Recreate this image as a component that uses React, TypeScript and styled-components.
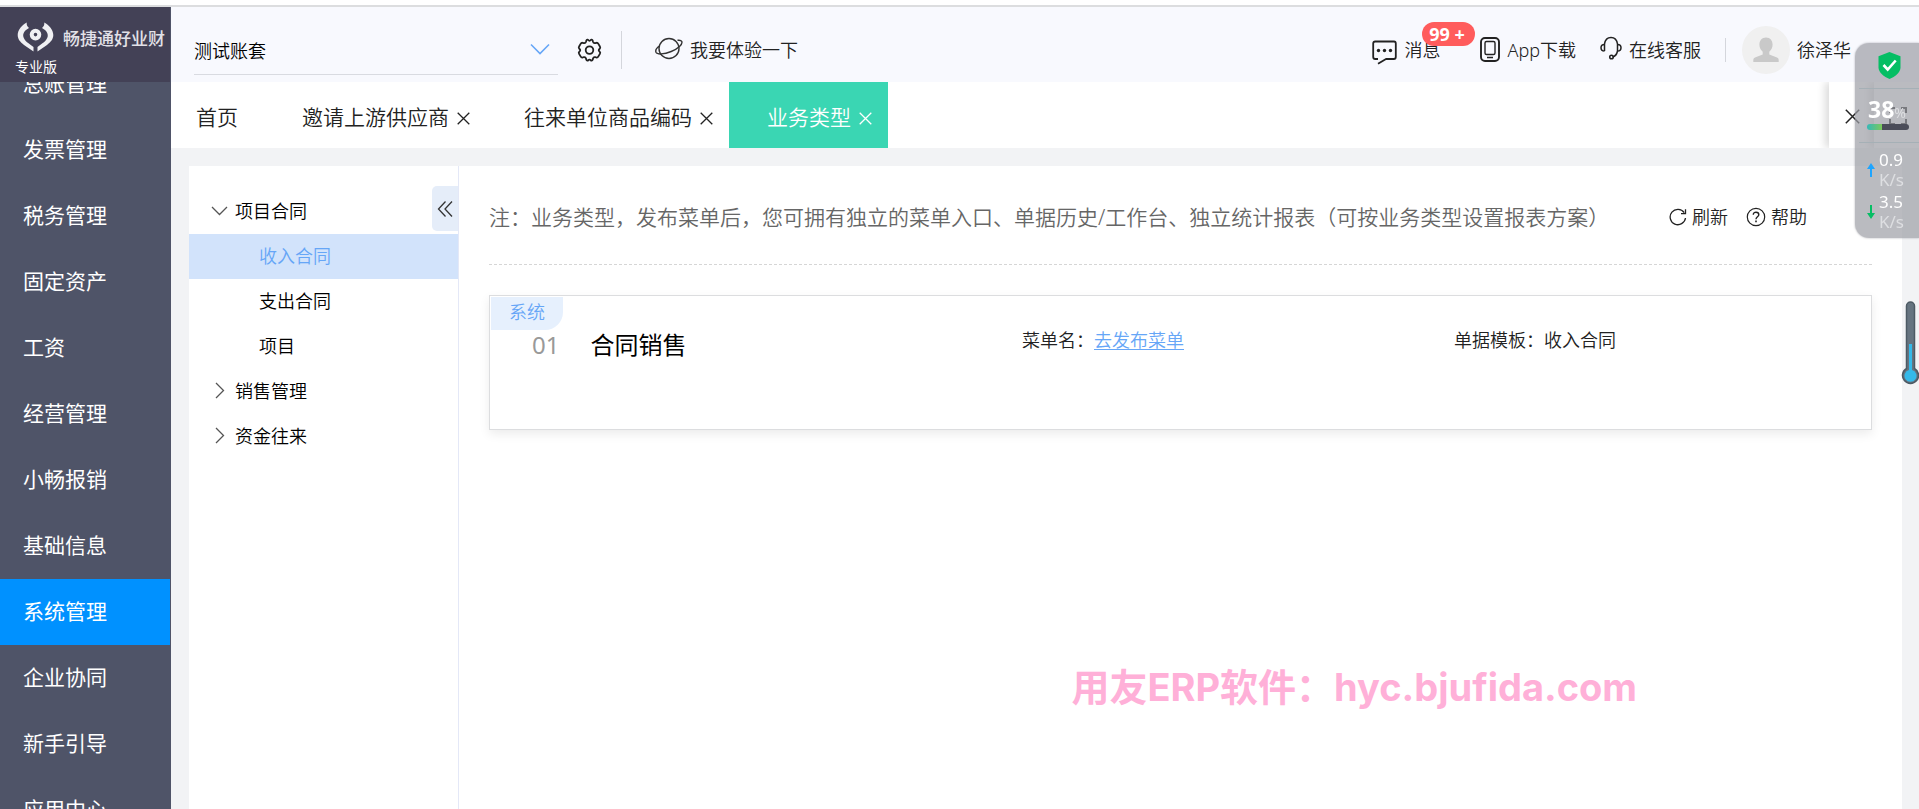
import React from "react";
import styled, { createGlobalStyle } from "styled-components";

const GlobalStyle = createGlobalStyle`
  *, *::before, *::after { box-sizing: border-box; }
  body {
    margin: 0;
    background: #fff;
    color: #222;
    font-family: "Noto Sans", "Noto Sans CJK SC", sans-serif;
    font-size: 18px;
    font-weight: 350;
    line-height: 24px;
    overflow: hidden;
  }
  button, select { font: inherit; color: inherit; background: none; border: 0; padding: 0; cursor: pointer; }
  a { color: inherit; text-decoration: none; }
  ul { list-style: none; margin: 0; padding: 0; }
  svg { display: block; flex: none; }
`;

const Page = styled.div`
  display: flex;
  height: 100vh;
  padding-top: 7px;
  background: linear-gradient(#fff 5px, #dcdddf 5px, #dcdddf 7px, #fff 7px);
`;

/* Sidebar */

const Sidebar = styled.aside`
  flex: none;
  display: flex;
  flex-direction: column;
  width: 171px;
  background: #4f5468;
`;

const Brand = styled.div`
  flex: none;
  height: 75px;
  padding: 14px 0 0 15px;
  margin-right: 1px;
  background: #434156;
  color: #fff;
`;

const BrandRow = styled.div`
  display: flex;
  align-items: center;
  gap: 9px;
  height: 32px;
  padding-left: 2px;
`;

const BrandName = styled.span`
  padding-top: 4px;
  font-size: 17px;
  font-weight: 500;
  line-height: 24px;
  color: #e2e1e8;
  white-space: nowrap;
`;

const Edition = styled.div`
  font-size: 14px;
  font-weight: 400;
  line-height: 20px;
  margin-top: 4px;
`;

const NavClip = styled.nav`
  flex: 1;
  min-height: 0;
  overflow: hidden;
`;

const NavList = styled.ul`
  margin-top: -31px;
`;

const NavItem = styled.a<{ $active?: boolean }>`
  display: flex;
  align-items: center;
  height: 66px;
  margin-right: 1px;
  padding: 0 0 2px 23px;
  font-size: 21px;
  font-weight: 400;
  color: #fff;
  background: ${(p) => (p.$active ? "#0091ff" : "transparent")};
`;

/* Header */

const Main = styled.div`
  flex: 1;
  min-width: 0;
  display: flex;
  flex-direction: column;
`;

const Header = styled.header`
  flex: none;
  display: flex;
  align-items: center;
  height: 75px;
  padding: 10px 68px 0 23px;
  background: #f8f9fe;
`;

const AccountField = styled.div`
  position: relative;
  align-self: flex-start;
  flex: 0 1 364px;
  height: 58px;
  border-bottom: 1px solid #d9dbe1;
`;

const AccountSelect = styled.select`
  appearance: none;
  width: 100%;
  height: 57px;
  padding-top: 11px;
  color: #000;
  outline: 0;
`;

const SelectArrow = styled.svg`
  position: absolute;
  right: 8px;
  top: 26px;
  pointer-events: none;
`;

const Divider = styled.span<{ $h: number }>`
  flex: none;
  width: 1px;
  height: ${(p) => p.$h}px;
  background: #d4d6dc;
`;

const HeaderLink = styled.a`
  position: relative;
  display: flex;
  align-items: center;
  gap: 7px;
  white-space: nowrap;
`;

const LeftTools = styled.div`
  display: flex;
  align-items: center;
  gap: 19px;
  margin-left: 19px;
`;

const TrialLink = styled(HeaderLink)`
  margin-left: 14px;
`;

const RightTools = styled.div`
  display: flex;
  align-items: center;
  gap: 24px;
  margin-left: auto;
`;

const MessageLink = styled(HeaderLink)`
  margin-right: 16px;
`;

const Badge = styled.span`
  position: absolute;
  left: 50px;
  top: -12px;
  width: 53px;
  height: 24px;
  border-radius: 12px;
  background: #ff5c5c;
  color: #fff;
  font-size: 18px;
  font-weight: 700;
  line-height: 24px;
  padding-right: 4px;
  text-align: center;
`;

const User = styled.div`
  display: flex;
  align-items: center;
  gap: 7px;
  margin-left: -8px;
  white-space: nowrap;
`;

/* Tabs */

const TabBar = styled.div`
  flex: none;
  display: flex;
  height: 66px;
  background: #fff;
  overflow: hidden;
`;

const Tab = styled.div<{ $active?: boolean; $home?: boolean }>`
  display: flex;
  align-items: center;
  gap: 8px;
  padding: ${(p) => (p.$home ? "3px 26px 0 25px" : "3px 16px 0 38px")};
  font-size: 21px;
  white-space: nowrap;
  color: ${(p) => (p.$active ? "#fff" : "#222")};
  background: ${(p) => (p.$active ? "#3ad6b3" : "transparent")};
`;

const CloseButton = styled.button`
  padding-top: 4px;
`;

const TabTools = styled.div`
  display: flex;
  margin-left: auto;
`;

const TabTool = styled.button`
  display: flex;
  align-items: center;
  justify-content: center;
  width: 45px;
  padding: 2px 0 0 2px;
  background: #fff;
  box-shadow: -4px 0 8px rgba(0, 0, 0, 0.14);
`;

/* Content */

const Body = styled.div`
  flex: 1;
  min-height: 0;
  display: flex;
  padding: 18px 17px 0 18px;
  background: #f2f3f5;
`;

const TreePanel = styled.aside`
  position: relative;
  flex: none;
  width: 270px;
  padding-top: 23px;
  background: #fff;
  border-right: 1px solid #e4e8f7;
`;

const Collapse = styled.button`
  position: absolute;
  right: 0;
  top: 20px;
  display: flex;
  align-items: center;
  justify-content: center;
  width: 26px;
  height: 45px;
  border-radius: 5px 0 0 5px;
  background: #e5edf9;
`;

const TreeRow = styled.a<{ $leaf?: boolean; $active?: boolean }>`
  display: flex;
  align-items: center;
  gap: 7px;
  height: 45px;
  padding: 0 0 2px ${(p) => (p.$leaf ? 70 : 22)}px;
  color: ${(p) => (p.$active ? "#66a6f7" : "#000")};
  background: ${(p) => (p.$active ? "#d2e3fb" : "transparent")};
`;

const Content = styled.main`
  position: relative;
  flex: 1;
  min-width: 0;
  padding: 0 30px;
  background: #fff;
`;

const NoteRow = styled.div`
  display: flex;
  align-items: center;
  height: 99px;
  padding: 4px 65px 0 0;
  border-bottom: 1px dashed #d6d6d6;
`;

const Note = styled.p`
  flex: 1;
  margin: 0;
  font-size: 21px;
  line-height: 32px;
  color: #666;
  white-space: nowrap;
`;

const Actions = styled.div`
  display: flex;
  gap: 18px;
`;

const Action = styled.button`
  display: flex;
  align-items: center;
  gap: 5px;
`;

const Card = styled.section`
  position: relative;
  display: grid;
  grid-template-columns: 532fr 432fr 417fr;
  height: 135px;
  margin-top: 30px;
  padding-top: 31px;
  border: 1px solid #dcdddf;
  box-shadow: 0 4px 10px rgba(0, 0, 0, 0.08);
`;

const Tag = styled.span`
  position: absolute;
  left: 1px;
  top: 1px;
  width: 72px;
  height: 33px;
  border-radius: 0 0 18px 0;
  background: #e6f0fd;
  color: #66a6f7;
  line-height: 30px;
  text-align: center;
`;

const CardTitle = styled.h2`
  display: flex;
  gap: 31px;
  margin: 0;
  padding-left: 42px;
  font-size: 24px;
  font-weight: 400;
  line-height: 36px;
  color: #000;
`;

const CardIndex = styled.span`
  color: #999;
`;

const Field = styled.div`
  padding-top: 1px;
`;

const TextLink = styled.a`
  color: #66a6f7;
  text-decoration: underline;
  text-underline-offset: 2px;
  text-decoration-thickness: 1px;
`;

const Watermark = styled.div`
  position: absolute;
  right: 265px;
  top: 495px;
  font-family: Inter, "Noto Sans CJK SC", sans-serif;
  font-size: 38px;
  font-weight: 700;
  line-height: 52px;
  color: #ffb0d8;
  white-space: nowrap;
`;

/* Desktop monitor floating over the window */

const Monitor = styled.div`
  position: fixed;
  right: 0;
  top: 43px;
  width: 64px;
  height: 195px;
  padding: 9px 0 0 4px;
  border-radius: 14px 0 0 14px;
  background: rgba(156, 158, 165, 0.7);
  box-shadow: 0 0 2px rgba(90, 90, 100, 0.5);
  color: #fff;
`;

const Shield = styled.div`
  height: 37px;
  padding-left: 19px;
  border-bottom: 1px solid #a5b0b6;
`;

const Usage = styled.div`
  height: 54px;
  padding: 6px 0 0 8px;
  border-bottom: 1px solid #a5b0b6;
  font-size: 23px;
  font-weight: 700;
  line-height: 28px;
  white-space: nowrap;
`;

const UsageValue = styled.div`
  display: flex;
  align-items: baseline;
  height: 28px;
  padding-left: 1px;
`;

const Percent = styled.span`
  font-size: 14px;
  font-weight: 400;
  color: #dedfe2;
`;

const Meter = styled.div`
  width: 42px;
  height: 6px;
  margin-top: 1px;
  border-radius: 3px;
  background: linear-gradient(90deg, #35b8b8, #7cc95a 15px, #4b4d59 15px);
`;

const Speeds = styled.div`
  padding: 6px 0 0 8px;
`;

const Speed = styled.div`
  display: flex;
  align-items: center;
  gap: 4px;
  height: 42px;
  font-size: 17px;
  line-height: 20px;
  font-weight: 400;
`;

const Unit = styled.div`
  color: #dedfe2;
`;

const Thermometer = styled.svg`
  position: fixed;
  right: 0;
  top: 301px;
`;

const Cross = ({ size = 13 }: { size?: number }) => (
  <svg width={size} height={size} viewBox="0 0 13 13" fill="none" stroke="currentColor" strokeWidth="1.3">
    <path d="M0.7 0.7 12.3 12.3M12.3 0.7 0.7 12.3" />
  </svg>
);

const LogoMark = () => (
  <svg width="37" height="30" viewBox="0 0 37 30">
    <g fill="#f0f0f3">
      <path d="M9.800 0.500C5 3 0.700 8 0.700 13c0 4 2.500 7 6.300 10l9.500 6.500v-4.500C12 21.500 7.200 19 6.300 14.500 5.600 10.500 9 7.500 12 6c-1.800-1.500-2.700-3.200-2.200-5.500z" />
      <path d="M27.200 0.500C32 3 36.300 8 36.300 13c0 4-2.500 7-6.300 10l-9.500 6.500v-4.500c4.500-3.500 9.300-6 10.200-10.500.7-4-2.700-7-5.700-8.500 1.800-1.500 2.700-3.200 2.200-5.500z" />
      <path fillRule="evenodd" d="M18.500 6.800a5.800 5.800 0 1 1 0 11.600 5.800 5.800 0 0 1 0-11.600zm0 4a1.800 1.800 0 1 0 0 3.600 1.800 1.800 0 0 0 0-3.600z" />
    </g>
  </svg>
);

const GearIcon = () => (
  <svg width="25" height="24" viewBox="0 0 25 24" fill="none" stroke="#222" strokeWidth="1.800" strokeLinejoin="round">
    <path d="M9.300 2.600c.5-1.200 1.500-1.300 2-.5.600.9 1.800.9 2.400 0 .5-.8 1.500-.7 2 .5l.3 1.200c.300 1 1.200 1.500 2.200 1.300l1.200-.3c1-.2 1.500.2 2 1.100l1.500 2.600c.6 1 .5 1.600-.2 2.200-1.300 1.100-1.300 1.900 0 3 .7.600.8 1.200.2 2.200l-1.500 2.500c-.5.900-1 1.300-2 1.100l-1.200-.3c-1-.2-1.900.300-2.200 1.300l-.3 1.200c-.5 1.200-1.500 1.200-2 .5-.6-.9-1.800-.9-2.400 0-.5.700-1.500.7-2-.5L9 20.500c-.3-1-1.200-1.500-2.200-1.300l-1.200.3c-1 .2-1.500-.2-2-1.100l-1.500-2.500c-.6-1-.5-1.600.2-2.200 1.300-1.100 1.300-1.900 0-3-.7-.6-.8-1.200-.2-2.200L3.600 5.900c.5-.9 1-1.300 2-1.100l1.200.3C7.800 5.300 8.700 4.800 9 3.800z" />
    <circle cx="12.500" cy="12.100" r="3.800" />
  </svg>
);

const PlanetIcon = () => (
  <svg width="28" height="26" viewBox="0 0 28 26" fill="none" stroke="#333" strokeWidth="1.400">
    <circle cx="14" cy="11.500" r="10" />
    <path d="M4.500 9C1.500 11 .3 13.500 1 15.200c1.200 2.600 8 2.200 15.200-.7 7-2.900 11.600-7.300 10.600-9.900-.5-1.200-2-1.600-4.300-1.300" />
  </svg>
);

const MessageIcon = () => (
  <svg width="25" height="31" viewBox="0 -6 25 31">
    <path d="M6 19H3.200Q1.200 19 1.200 17V3.500Q1.200 1.500 3.200 1.500H22Q23.800 1.500 23.800 3.500V17Q23.800 19 21.800 19H14L6 23.800" fill="none" stroke="#222" strokeWidth="1.800" strokeLinejoin="round" />
    <g fill="#222">
      <circle cx="6.500" cy="10.500" r="1.700" />
      <circle cx="12.500" cy="10.500" r="1.700" />
      <circle cx="18.500" cy="10.500" r="1.700" />
    </g>
  </svg>
);

const PhoneIcon = () => (
  <svg width="20" height="25" viewBox="0 0 20 25" fill="none" stroke="#222">
    <rect x="1" y="1" width="18" height="23" rx="4" strokeWidth="1.900" />
    <rect x="5" y="4.500" width="10" height="13" rx="1.500" strokeWidth="1.400" />
    <path d="M7 20.500h6" strokeWidth="1.500" />
  </svg>
);

const HeadsetIcon = () => (
  <svg width="22" height="28" viewBox="0 0 22 28" fill="none" stroke="#222" strokeWidth="1.500">
    <path d="M4.500 15V8Q5.500 1.500 11 1.500T17.500 8v7Q16.500 20 12.500 21" />
    <path d="M4.500 8.500C2 8.500 1 10 1 11.700S2 15 4.500 15M17.500 8.500c2.500 0 3.500 1.500 3.500 3.200S20 15 17.500 15" />
    <circle cx="11.500" cy="21" r="1.800" />
  </svg>
);

const Avatar = () => (
  <svg width="48" height="48" viewBox="0 0 48 48">
    <circle cx="24" cy="24" r="24" fill="#f0f0f0" />
    <path d="M24 11.500c4.300 0 6.600 3.300 6.600 7 0 3-1.400 5.600-3.300 7.300v2.600l7.700 3.200c1.200.6 1.700 1.500 1.700 2.600V36H11.300v-1.800c0-1.100.5-2 1.700-2.600l7.700-3.200v-2.600c-1.900-1.700-3.300-4.300-3.300-7.300 0-3.700 2.300-7 6.600-7z" fill="#c9c9c9" />
  </svg>
);

const Chevron = ({ open }: { open?: boolean }) => (
  <svg width="17" height="17" viewBox="0 0 17 17" fill="none" stroke="#555" strokeWidth="1.300">
    <path d={open ? "M1 5l7.500 7.500L16 5" : "M5 1l7.500 7.500L5 16"} />
  </svg>
);

const RefreshIcon = () => (
  <svg width="18" height="18" viewBox="0 0 18 18" fill="none" stroke="#222" strokeWidth="1.300">
    <path d="M16.500 10A7.700 7.700 0 1 1 15.200 4.600" />
    <path d="M16.500 1.200v4.500h-4.500" />
  </svg>
);

const HelpIcon = () => (
  <svg width="20" height="20" viewBox="0 0 20 20" fill="none" stroke="#222" strokeWidth="1.200">
    <circle cx="10" cy="10" r="8.700" />
    <path d="M7.300 7.800c0-3.600 5.500-3.300 5.500-.1 0 2-2.800 2.200-2.800 4.500" strokeWidth="1.400" />
    <path d="M10 13.500v1.700" strokeWidth="1.600" />
  </svg>
);

const Arrow = ({ down }: { down?: boolean }) => (
  <svg width="8" height="14" viewBox="0 0 8 14" fill={down ? "#05be64" : "#1ea5ff"}>
    <path d={down ? "M3 0h2v8h3l-4 6-4-6h3z" : "M3 14h2V6h3L4 0 0 6h3z"} />
  </svg>
);

const NAV = ["总账管理", "发票管理", "税务管理", "固定资产", "工资", "经营管理", "小畅报销", "基础信息", "系统管理", "企业协同", "新手引导", "应用中心"];

const TABS = ["邀请上游供应商", "往来单位商品编码", "业务类型"];

const TREE = [
  { label: "项目合同", open: true },
  { label: "收入合同", leaf: true, active: true },
  { label: "支出合同", leaf: true },
  { label: "项目", leaf: true },
  { label: "销售管理" },
  { label: "资金往来" },
];

export default function App() {
  return (
    <>
      <GlobalStyle />
      <Page>
        <Sidebar>
          <Brand>
            <BrandRow>
              <LogoMark />
              <BrandName>畅捷通好业财</BrandName>
            </BrandRow>
            <Edition>专业版</Edition>
          </Brand>
          <NavClip>
            <NavList>
              {NAV.map((label) => (
                <li key={label}>
                  <NavItem href="#" $active={label === "系统管理"}>{label}</NavItem>
                </li>
              ))}
            </NavList>
          </NavClip>
        </Sidebar>

        <Main>
          <Header>
            <AccountField>
              <AccountSelect aria-label="账套">
                <option>测试账套</option>
              </AccountSelect>
              <SelectArrow width="20" height="12" viewBox="0 0 20 12" fill="none" stroke="#66a6f7" strokeWidth="1.600">
                <path d="M1 1.500l9 9 9-9" />
              </SelectArrow>
            </AccountField>
            <LeftTools>
              <button aria-label="设置"><GearIcon /></button>
              <Divider $h={38} />
              <TrialLink href="#"><PlanetIcon />我要体验一下</TrialLink>
            </LeftTools>
            <RightTools>
              <MessageLink href="#">
                <MessageIcon />消息
                <Badge>99 +</Badge>
              </MessageLink>
              <HeaderLink href="#"><PhoneIcon />App下载</HeaderLink>
              <HeaderLink href="#"><HeadsetIcon />在线客服</HeaderLink>
              <Divider $h={24} />
              <User><Avatar />徐泽华</User>
            </RightTools>
          </Header>

          <TabBar>
            <Tab $home>首页</Tab>
            {TABS.map((label) => (
              <Tab key={label} $active={label === "业务类型"}>
                {label}
                <CloseButton aria-label={"关闭" + label}><Cross /></CloseButton>
              </Tab>
            ))}
            <TabTools>
              <TabTool aria-label="关闭全部"><Cross size={15} /></TabTool>
              <TabTool aria-label="全屏">
                <svg width="18" height="18" viewBox="0 0 18 18" fill="none" stroke="#222" strokeWidth="2">
                  <path d="M1 6V1h5M12 1h5v5M17 12v5h-5M6 17H1v-5" />
                </svg>
              </TabTool>
            </TabTools>
          </TabBar>

          <Body>
            <TreePanel>
              <ul>
                {TREE.map((n) => (
                  <li key={n.label}>
                    <TreeRow href="#" $leaf={n.leaf} $active={n.active}>
                      {!n.leaf && <Chevron open={n.open} />}
                      {n.label}
                    </TreeRow>
                  </li>
                ))}
              </ul>
              <Collapse aria-label="收起">
                <svg width="16" height="16" viewBox="0 0 16 16" fill="none" stroke="#333" strokeWidth="1.300">
                  <path d="M8.500 0.500 1.500 8l7 7.500M15 0.500 8 8l7 7.500" />
                </svg>
              </Collapse>
            </TreePanel>

            <Content>
              <NoteRow>
                <Note>注：业务类型，发布菜单后，您可拥有独立的菜单入口、单据历史/工作台、独立统计报表（可按业务类型设置报表方案）</Note>
                <Actions>
                  <Action><RefreshIcon />刷新</Action>
                  <Action><HelpIcon />帮助</Action>
                </Actions>
              </NoteRow>
              <Card>
                <Tag>系统</Tag>
                <CardTitle><CardIndex>01</CardIndex>合同销售</CardTitle>
                <Field>菜单名：<TextLink href="#">去发布菜单</TextLink></Field>
                <Field>单据模板：收入合同</Field>
              </Card>
              <Watermark>用友ERP软件：hyc.bjufida.com</Watermark>
            </Content>
          </Body>
        </Main>
      </Page>

      <Monitor>
        <Shield>
          <svg width="23" height="27" viewBox="0 0 23 27">
            <path d="M11.500 0l11 4.200v11c0 5.500-5.500 9.500-11 11.800C6 24.700.5 20.700.5 15.200v-11z" fill="#05be64" />
            <path d="M5.500 13l4.200 4.500 8-9" fill="none" stroke="#fff" strokeWidth="2.600" />
          </svg>
        </Shield>
        <Usage>
          <UsageValue>38<Percent>%</Percent></UsageValue>
          <Meter />
        </Usage>
        <Speeds>
          <Speed>
            <Arrow />
            <div>0.9<Unit>K/s</Unit></div>
          </Speed>
          <Speed>
            <Arrow down />
            <div>3.5<Unit>K/s</Unit></div>
          </Speed>
        </Speeds>
      </Monitor>

      <Thermometer width="18" height="85" viewBox="0 0 18 85">
        <path d="M5.500 5a4 4 0 0 1 8 0v62.500a8 8 0 1 1-8 0z" fill="#667480" stroke="#4d5a64" strokeWidth="1.500" />
        <path d="M8 43h3v26a6 6 0 1 1-3 0z" fill="#35b9e9" />
      </Thermometer>
    </>
  );
}
